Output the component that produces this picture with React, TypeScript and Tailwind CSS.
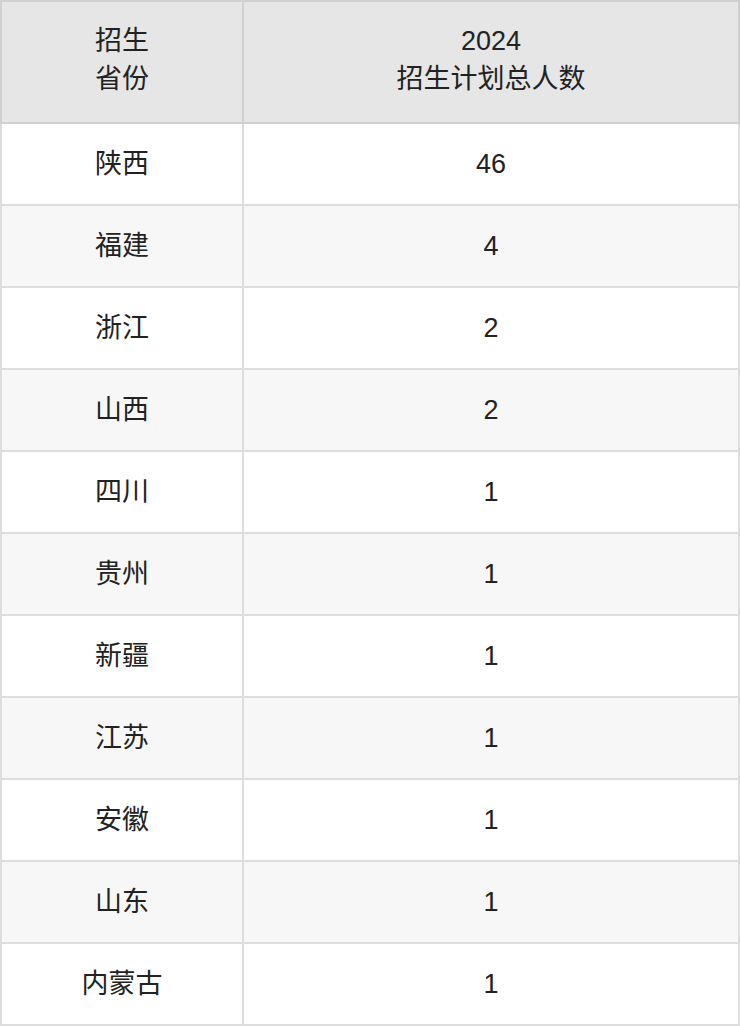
const rows: [string, string][] = [
  ["陕西", "46"],
  ["福建", "4"],
  ["浙江", "2"],
  ["山西", "2"],
  ["四川", "1"],
  ["贵州", "1"],
  ["新疆", "1"],
  ["江苏", "1"],
  ["安徽", "1"],
  ["山东", "1"],
  ["内蒙古", "1"],
];

export default function App() {
  return (
    <div className="w-[740px] bg-white text-[#222] font-['Liberation_Sans','Noto_Sans_CJK_SC',sans-serif]">
      <table className="w-full border-collapse border-2 border-[#d4d4d4] text-[27px] leading-[38px]">
        <thead>
          <tr className="h-[122px] bg-[#e6e6e6]">
            <th className="w-[242px] border-2 border-[#d0d0d0] pb-1 font-normal">
              招生
              <br />
              省份
            </th>
            <th className="border-2 border-[#d0d0d0] pb-1 font-normal">
              2024
              <br />
              招生计划总人数
            </th>
          </tr>
        </thead>
        <tbody>
          {rows.map(([prov, num], i) => (
            <tr key={prov} className={`h-[82px] ${i % 2 === 1 ? "bg-[#f7f7f7]" : "bg-white"}`}>
              <td className="border-2 border-[#dddddd] text-center">{prov}</td>
              <td className="border-2 border-[#dddddd] text-center">{num}</td>
            </tr>
          ))}
        </tbody>
      </table>
    </div>
  );
}
